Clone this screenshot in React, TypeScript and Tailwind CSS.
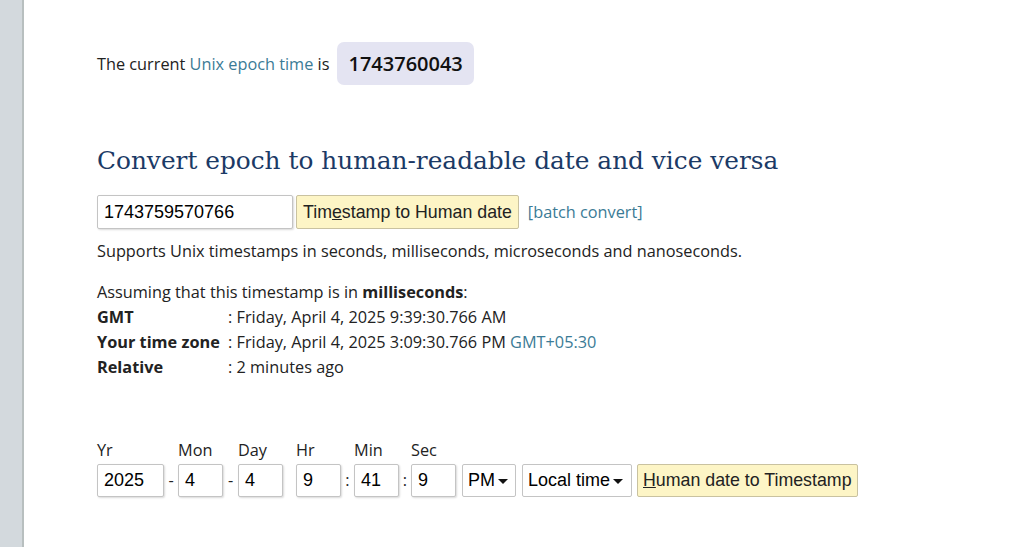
import React from "react";

const body = "font-['Open_Sans',sans-serif]";
const ctrl = "font-['Liberation_Sans',Arial,sans-serif]";

function Field({ value, w }: { value: string; w: string }) {
	return (
		<div
			className={`${w} h-[33px] flex items-center px-[6px] border border-[#c4c4c4] rounded-[2px] shadow-[1px_1px_2px_rgba(0,0,0,0.15)] bg-white text-[18px] text-black ${ctrl}`}
		>
			{value}
		</div>
	);
}

function Caret() {
	return (
		<svg width="10" height="6" viewBox="0 0 10 6" className="ml-[3px] mt-[2px]">
			<path d="M0 0h10L5 5z" fill="#111" />
		</svg>
	);
}

export default function App() {
	return (
		<div className="min-h-[547px] w-[1020px] flex bg-white text-[#222]">
			{/* left gray strip */}
			<div className="w-[24px] shrink-0 bg-[#d3d9dd] border-r-2 border-[#b8bfbf]" />

			<main className={`pl-[73px] pt-[42px] ${body} text-[16.3px]`}>
				{/* current epoch */}
				<div className="flex items-center h-[43px]">
					<span className="mt-[2px]">
						The current <span className="text-[#3b7b96]">Unix epoch time</span> is
					</span>
					<span className="ml-[8px] h-[43px] px-[11px] flex items-center rounded-[7px] bg-[#e4e4f2] text-[20px] font-semibold text-[#111]">
						1743760043
					</span>
				</div>

				<h1 className="mt-[58px] font-['DejaVu_Serif',serif] text-[24.8px] leading-[36px] text-[#1b3a66]">
					Convert epoch to human-readable date and vice versa
				</h1>

				{/* timestamp converter */}
				<div className="mt-[16px] flex items-center">
					<Field value="1743759570766" w="w-[196px] h-[34px]" />
					<button
						className={`ml-[3px] h-[34px] px-[6px] border border-[#c9c2a0] rounded-[2px] bg-[#fdf5c6] text-[17.8px] text-[#222] ${ctrl}`}
					>
						Tim<span className="underline">e</span>stamp to Human date
					</button>
					<a className="ml-[9px] text-[#3b7b96]">[batch convert]</a>
				</div>

				<p className="mt-[10px] leading-[25px]">
					Supports Unix timestamps in seconds, milliseconds, microseconds and nanoseconds.
				</p>

				<div className="mt-[16px] leading-[25px]">
					<div>
						Assuming that this timestamp is in <b>milliseconds</b>:
					</div>
					<div className="flex">
						<b className="w-[131px]">GMT</b>
						<span>: Friday, April 4, 2025 9:39:30.766 AM</span>
					</div>
					<div className="flex">
						<b className="w-[131px]">Your time zone</b>
						<span>
							: Friday, April 4, 2025 3:09:30.766 PM{" "}
							<span className="text-[#3b7b96]">GMT+05:30</span>
						</span>
					</div>
					<div className="flex">
						<b className="w-[131px]">Relative</b>
						<span>: 2 minutes ago</span>
					</div>
				</div>

				{/* human date to timestamp */}
				<div className="mt-[57px] flex items-end">
					<div className="flex flex-col">
						<span className="leading-[27px]">Yr</span>
						<Field value="2025" w="w-[67px]" />
					</div>
					<span className="w-[14px] h-[33px] flex items-center justify-center">-</span>
					<div className="flex flex-col">
						<span className="leading-[27px]">Mon</span>
						<Field value="4" w="w-[45px]" />
					</div>
					<span className="w-[15px] h-[33px] flex items-center justify-center">-</span>
					<div className="flex flex-col">
						<span className="leading-[27px]">Day</span>
						<Field value="4" w="w-[45px]" />
					</div>
					<div className="ml-[13px] flex flex-col">
						<span className="leading-[27px]">Hr</span>
						<Field value="9" w="w-[45px]" />
					</div>
					<span className="w-[13px] h-[33px] flex items-center justify-center">:</span>
					<div className="flex flex-col">
						<span className="leading-[27px]">Min</span>
						<Field value="41" w="w-[45px]" />
					</div>
					<span className="w-[12px] h-[33px] flex items-center justify-center">:</span>
					<div className="flex flex-col">
						<span className="leading-[27px]">Sec</span>
						<Field value="9" w="w-[45px]" />
					</div>
					<div
						className={`ml-[6px] w-[54px] h-[33px] flex items-center px-[5px] border border-[#c4c4c4] rounded-[2px] bg-white text-[18px] text-black ${ctrl}`}
					>
						PM
						<Caret />
					</div>
					<div
						className={`ml-[6px] w-[110px] h-[33px] flex items-center px-[5px] border border-[#c4c4c4] rounded-[2px] bg-white text-[18px] text-black ${ctrl}`}
					>
						Local time
						<Caret />
					</div>
					<button
						className={`ml-[5px] h-[33px] px-[5px] border border-[#c9c2a0] rounded-[2px] bg-[#fdf5c6] text-[17.8px] text-[#222] ${ctrl}`}
					>
						<span className="underline">H</span>uman date to Timestamp
					</button>
				</div>
			</main>
		</div>
	);
}
